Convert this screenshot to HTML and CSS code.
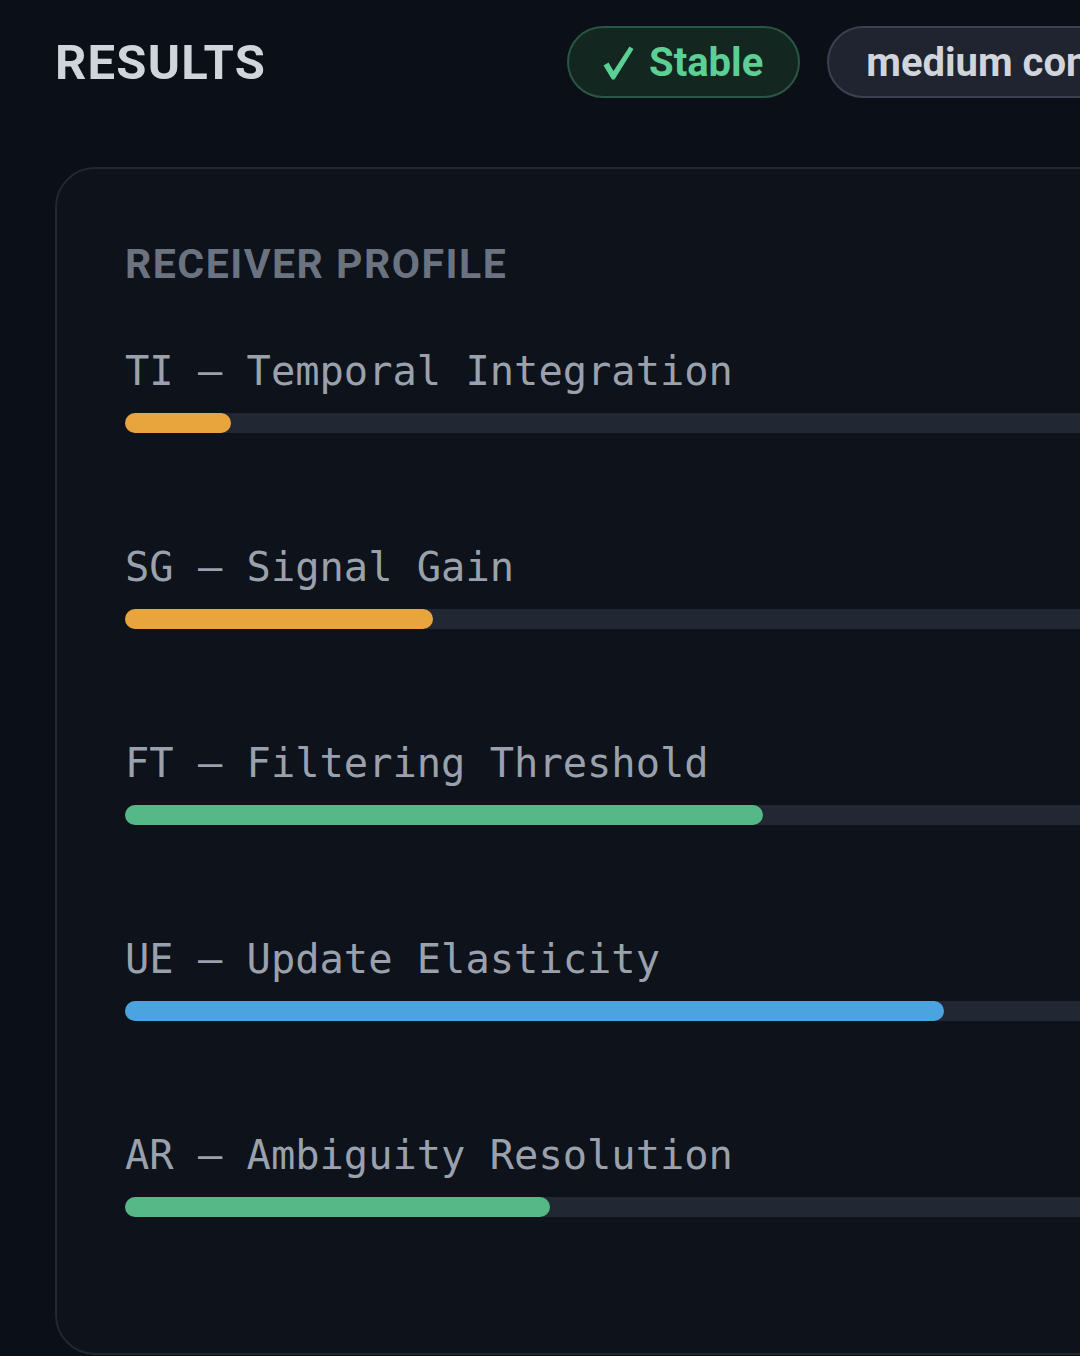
FILE: index.html
```html
<!DOCTYPE html>
<html lang="en">
<head>
<meta charset="utf-8">
<title>Results</title>
<link rel="stylesheet" href="styles.css">
</head>
<body>
<div class="page">
  <header class="header">
    <h1 class="title">RESULTS</h1>
    <div class="pills">
      <span class="pill pill-stable"><svg class="check" viewBox="0 0 31 34" width="31" height="34" aria-hidden="true"><path d="M0.5 19.5 L5.5 16.5 L10.5 25 L26.5 0.5 L30.5 3 L11.5 33.5 L9 33.5 Z" fill="currentColor"/></svg><span>Stable</span></span>
      <span class="pill pill-neutral">medium confidence</span>
    </div>
  </header>
  <section class="card">
    <h2 class="card-title">RECEIVER PROFILE</h2>
    <div class="rows">
      <div class="row">
        <div class="label">TI — Temporal Integration</div>
        <div class="track"><div class="fill fill-orange" style="width:106px"></div></div>
      </div>
      <div class="row">
        <div class="label">SG — Signal Gain</div>
        <div class="track"><div class="fill fill-orange" style="width:308px"></div></div>
      </div>
      <div class="row">
        <div class="label">FT — Filtering Threshold</div>
        <div class="track"><div class="fill fill-green" style="width:638px"></div></div>
      </div>
      <div class="row">
        <div class="label">UE — Update Elasticity</div>
        <div class="track"><div class="fill fill-blue" style="width:819px"></div></div>
      </div>
      <div class="row">
        <div class="label">AR — Ambiguity Resolution</div>
        <div class="track"><div class="fill fill-green" style="width:425px"></div></div>
      </div>
    </div>
  </section>
</div>
</body>
</html>
```
FILE: styles.css
```css
html, body {
  margin: 0;
  padding: 0;
  width: 1080px;
  height: 1356px;
  overflow: hidden;
  background: #0b0f17;
}

.page {
  padding: 26px 0 0 55px;
  width: 1400px;
  font-family: Roboto, "Liberation Sans", sans-serif;
}

.header {
  display: flex;
  align-items: center;
  height: 72px;
}

.title {
  margin: 0;
  width: 512px;
  font-size: 49px;
  font-weight: 700;
  letter-spacing: 1.2px;
  color: #d1d5db;
  line-height: 1;
}

.pills {
  display: flex;
  gap: 27px;
}

.pill {
  box-sizing: border-box;
  height: 72px;
  display: inline-flex;
  align-items: center;
  border-radius: 36px;
  font-size: 40px;
  font-weight: 700;
  white-space: nowrap;
}

.pill-stable {
  padding: 0 35px 0 34px;
  gap: 15px;
  background: #13261f;
  border: 2px solid #2a5645;
  color: #5ccf94;
}

.check {
  display: block;
  flex: none;
  margin-top: 2px;
}

.pill-neutral {
  padding: 0 37px;
  background: #1f2430;
  border: 2px solid #3b4150;
  color: #d1d5db;
}

.card {
  box-sizing: border-box;
  margin-top: 69px;
  width: 1240px;
  height: 1188px;
  padding: 71px 68px 0 68px;
  background: #0d121b;
  border: 2px solid #222731;
  border-radius: 40px;
}

.card-title {
  margin: 0;
  font-size: 41px;
  font-weight: 700;
  letter-spacing: 1.5px;
  line-height: 48px;
  color: #6b7280;
}

.rows {
  margin-top: 59px;
  display: flex;
  flex-direction: column;
  gap: 110px;
}

.row {
  display: flex;
  flex-direction: column;
  gap: 18px;
}

.label {
  font-family: "DejaVu Sans Mono", monospace;
  font-size: 40.4px;
  line-height: 48px;
  color: #9aa1ad;
  white-space: nowrap;
}

.track {
  height: 20px;
  width: 1100px;
  background: #222734;
  border-radius: 10px;
}

.fill {
  height: 100%;
  border-radius: 10px;
}

.fill-orange { background: #e8a53e; }
.fill-green { background: #55b886; }
.fill-blue { background: #4ba3e0; }
```
